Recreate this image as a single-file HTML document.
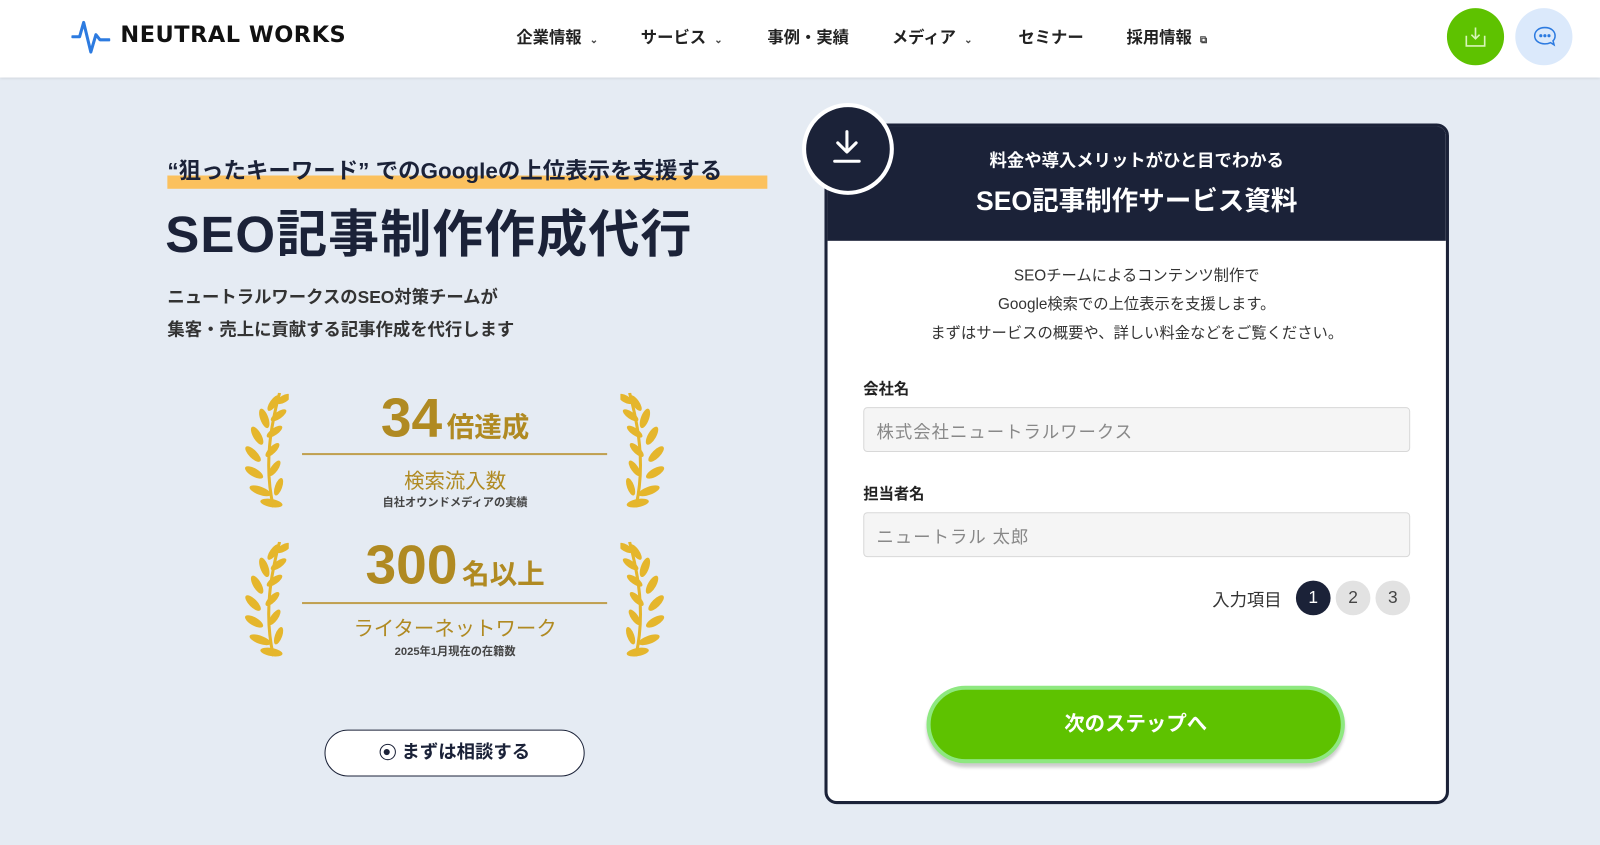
<!DOCTYPE html>
<html><head><meta charset="utf-8"><style>
*{margin:0;padding:0;box-sizing:border-box}
body{width:1600px;height:845px;overflow:hidden;background:#e5ebf3;font-family:"Liberation Sans","Noto Sans CJK JP",sans-serif;position:relative;color:#1b2238}
#w{position:absolute;left:0;top:0;width:1568px;height:828px;transform:scale(1.0204);transform-origin:0 0}
.a{position:absolute}
header{position:absolute;left:0;top:0;width:1568px;height:76px;background:#fff;box-shadow:0 1px 3px rgba(0,0,0,.12)}
.nav{font-size:16px;font-weight:bold;color:#222;top:23px;white-space:nowrap}
.nav small{font-size:10px;margin-left:8px;color:#444}
.gold{color:#b08a22}
.lbl{font-size:15px;font-weight:bold;color:#222}
.inp{background:#f5f5f5;border:1px solid #d8d8d8;border-radius:4px;height:44px;width:536px;left:846px;font-size:17px;color:#888;padding:9px 12px;letter-spacing:1px}
.st{width:34px;height:34px;border-radius:50%;background:#e2e2e2;color:#444;font-size:17px;text-align:center;line-height:34px;top:569px}
</style></head><body><div id="w">
<header>
<svg class="a" style="left:70px;top:18px" width="38" height="36" viewBox="0 0 38 36"><path d="M1 18 H8 L12 4 L19 33 L24 16 L28 21 H37" fill="none" stroke="#2d7be0" stroke-width="3" stroke-linejoin="round" stroke-linecap="round"/></svg>
<div class="a" style="left:118px;top:22px;font-size:22px;font-weight:bold;color:#111;letter-spacing:.5px;font-family:'DejaVu Sans','Liberation Sans',sans-serif">NEUTRAL WORKS</div>
<div class="a nav" style="left:506px">企業情報<small>⌄</small></div>
<div class="a nav" style="left:628px">サービス<small>⌄</small></div>
<div class="a nav" style="left:752px">事例・実績</div>
<div class="a nav" style="left:874px">メディア<small>⌄</small></div>
<div class="a nav" style="left:998px">セミナー</div>
<div class="a nav" style="left:1104px">採用情報<small>⧉</small></div>
<div class="a" style="left:1418px;top:8px;width:56px;height:56px;border-radius:50%;background:#5ec200"></div>
<svg class="a" style="left:1435px;top:25px" width="22" height="22" viewBox="0 0 22 22" fill="none" stroke="#d8f5b8" stroke-width="1.6"><path d="M2 10 V20 H20 V10 M11 2 V13 M7 9 L11 13 L15 9"/></svg>
<div class="a" style="left:1485px;top:8px;width:56px;height:56px;border-radius:50%;background:#dbe9fb"></div>
<svg class="a" style="left:1502px;top:25px" width="24" height="22" viewBox="0 0 24 22" fill="none" stroke="#2d7be0" stroke-width="1.5"><path d="M12 2 C6 2 2 5.5 2 10 C2 14.5 6 18 12 18 C14 18 16 17.5 17.5 16.8 L21 19 L20 15 C21.3 13.7 22 12 22 10 C22 5.5 18 2 12 2Z"/><circle cx="8" cy="10" r=".8" fill="#2d7be0"/><circle cx="12" cy="10" r=".8" fill="#2d7be0"/><circle cx="16" cy="10" r=".8" fill="#2d7be0"/></svg>
</header>

<div class="a" style="left:164px;top:172px;width:588px;height:13px;background:#fbc15e"></div>
<div class="a" style="left:164px;top:150px;font-size:22px;font-weight:bold;color:#1b2238;white-space:nowrap">“狙ったキーワード” でのGoogleの上位表示を支援する</div>
<div class="a" style="left:162px;top:190px;font-size:50px;font-weight:bold;color:#1b2238;white-space:nowrap;letter-spacing:1px">SEO記事制作作成代行</div>
<div class="a" style="left:164px;top:276px;font-size:17px;font-weight:bold;color:#333;line-height:32px">ニュートラルワークスのSEO対策チームが<br>集客・売上に貢献する記事作成を代行します</div>

<svg width="0" height="0" style="position:absolute"><defs>
<g id="lau" fill="#e5b62c">
<path d="M36 0 C28 30 20 70 30 112" fill="none" stroke="#e5b62c" stroke-width="3"/>
<ellipse cx="30" cy="10" rx="3.5" ry="9" transform="rotate(35 30 10)"/>
<ellipse cx="40" cy="6" rx="3.5" ry="8" transform="rotate(60 40 6)"/>
<ellipse cx="21" cy="25" rx="4" ry="10" transform="rotate(-20 21 25)"/>
<ellipse cx="35" cy="22" rx="3.5" ry="9" transform="rotate(55 35 22)"/>
<ellipse cx="14" cy="42" rx="4" ry="10" transform="rotate(-30 14 42)"/>
<ellipse cx="31" cy="38" rx="3.5" ry="9" transform="rotate(55 31 38)"/>
<ellipse cx="10" cy="60" rx="4" ry="10" transform="rotate(-45 10 60)"/>
<ellipse cx="29" cy="56" rx="3.5" ry="9" transform="rotate(45 29 56)"/>
<ellipse cx="11" cy="78" rx="4" ry="10" transform="rotate(-60 11 78)"/>
<ellipse cx="31" cy="74" rx="3.5" ry="9" transform="rotate(35 31 74)"/>
<ellipse cx="17" cy="96" rx="4" ry="11" transform="rotate(-70 17 96)"/>
<ellipse cx="35" cy="92" rx="3.5" ry="9" transform="rotate(20 35 92)"/>
<ellipse cx="28" cy="108" rx="4" ry="11" transform="rotate(-80 28 108)"/>
</g></defs></svg>
<svg class="a" style="left:238px;top:385px" width="45" height="115"><use href="#lau"/></svg>
<svg class="a" style="left:608px;top:385px;transform:scaleX(-1)" width="45" height="115"><use href="#lau"/></svg>
<svg class="a" style="left:238px;top:531px" width="45" height="115"><use href="#lau"/></svg>
<svg class="a" style="left:608px;top:531px;transform:scaleX(-1)" width="45" height="115"><use href="#lau"/></svg>

<div class="a gold" style="left:296px;width:300px;top:379px;text-align:center;font-weight:bold;white-space:nowrap"><span style="font-size:54px">34</span> <span style="font-size:27px">倍達成</span></div>
<div class="a" style="left:296px;top:444px;width:299px;height:2px;background:#c0a050"></div>
<div class="a gold" style="left:296px;width:300px;top:455px;text-align:center;font-size:20px">検索流入数</div>
<div class="a" style="left:296px;width:300px;top:484px;text-align:center;font-size:11px;font-weight:bold;color:#444">自社オウンドメディアの実績</div>
<div class="a gold" style="left:296px;width:300px;top:523px;text-align:center;font-weight:bold;white-space:nowrap"><span style="font-size:54px">300</span> <span style="font-size:27px">名以上</span></div>
<div class="a" style="left:296px;top:590px;width:299px;height:2px;background:#c0a050"></div>
<div class="a gold" style="left:296px;width:300px;top:600px;text-align:center;font-size:20px">ライターネットワーク</div>
<div class="a" style="left:296px;width:300px;top:630px;text-align:center;font-size:11px;font-weight:bold;color:#444">2025年1月現在の在籍数</div>

<div class="a" style="left:318px;top:715px;width:255px;height:46px;border:1.5px solid #1b2238;border-radius:23px;background:#fff;text-align:center;font-size:18px;font-weight:bold;line-height:42px;color:#1b2238"><span style="display:inline-block;width:16px;height:16px;border:1.5px solid #1b2238;border-radius:50%;vertical-align:-2px;margin-right:6px;position:relative"><span style="position:absolute;left:3.5px;top:3.5px;width:6px;height:6px;border-radius:50%;background:#1b2238"></span></span>まずは相談する</div>

<div class="a" style="left:808px;top:121px;width:612px;height:667px;border:3.5px solid #1b2238;border-radius:12px;background:#fff;overflow:hidden">
<div style="height:112px;background:#1b2238;color:#fff;text-align:center">
<div style="padding-top:19px;font-size:17px;font-weight:bold">料金や導入メリットがひと目でわかる</div>
<div style="margin-top:9px;font-size:26px;font-weight:bold">SEO記事制作サービス資料</div>
</div>
<div style="text-align:center;font-size:15px;color:#333;line-height:28px;margin-top:21px">SEOチームによるコンテンツ制作で<br>Google検索での上位表示を支援します。<br>まずはサービスの概要や、詳しい料金などをご覧ください。</div>
</div>
<div class="a" style="left:786px;top:101px;width:90px;height:90px;border-radius:50%;background:#1b2238;border:4px solid #fff"></div>
<svg class="a" style="left:815px;top:126px" width="30" height="36" viewBox="0 0 30 36" fill="none" stroke="#fff" stroke-width="3" stroke-linecap="round" stroke-linejoin="round"><path d="M15 3 V22 M6 14 L15 23 L24 14 M3 32 H27"/></svg>

<div class="a lbl" style="left:846px;top:370px">会社名</div>
<div class="a inp" style="top:399px">株式会社ニュートラルワークス</div>
<div class="a lbl" style="left:846px;top:473px">担当者名</div>
<div class="a inp" style="top:502px">ニュートラル 太郎</div>
<div class="a" style="left:1188px;top:574px;font-size:17px;color:#333">入力項目</div>
<div class="a st" style="left:1270px;background:#1b2238;color:#fff">1</div>
<div class="a st" style="left:1309px">2</div>
<div class="a st" style="left:1348px">3</div>
<div class="a" style="left:908px;top:672px;width:410px;height:76px;border-radius:38px;background:#5ec200;border:4px solid #8ee880;box-shadow:0 4px 3px rgba(0,0,0,.2);color:#fff;font-size:20px;font-weight:bold;text-align:center;line-height:68px">次のステップへ</div>
</div></body></html>
